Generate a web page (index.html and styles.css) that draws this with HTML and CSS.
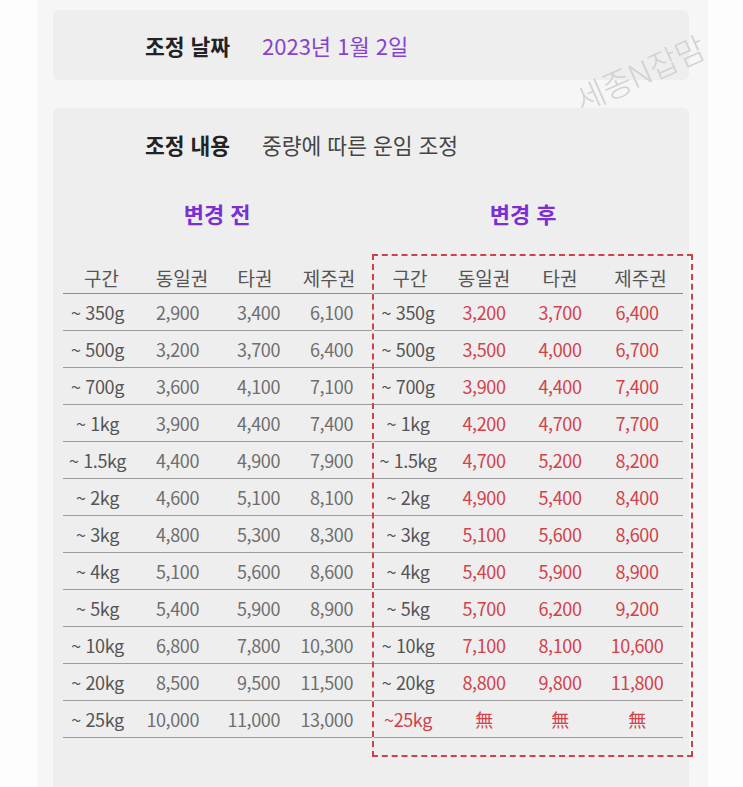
FILE: index.html
```html
<!DOCTYPE html>
<html lang="ko">
<head>
<meta charset="utf-8">
<title>운임 조정</title>
<link rel="stylesheet" href="styles.css">
</head>
<body>
<div class="panel">
  <div class="card card-date">
    <span class="label">조정 날짜</span>
    <span class="date">2023년 1월 2일</span>
  </div>
  <div class="card card-main">
    <div class="info">
      <span class="label">조정 내용</span>
      <span class="desc">중량에 따른 운임 조정</span>
    </div>
    <div class="headings">
      <div class="heading left-h">변경 전</div>
      <div class="heading right-h">변경 후</div>
    </div>
    <div class="tables">
      <div class="tbl tbl-before">
        <div class="row head"><span>구간</span><span>동일권</span><span>타권</span><span>제주권</span></div>
        <div class="row"><span>~ 350g</span><span>2,900</span><span>3,400</span><span>6,100</span></div>
        <div class="row"><span>~ 500g</span><span>3,200</span><span>3,700</span><span>6,400</span></div>
        <div class="row"><span>~ 700g</span><span>3,600</span><span>4,100</span><span>7,100</span></div>
        <div class="row"><span>~ 1kg</span><span>3,900</span><span>4,400</span><span>7,400</span></div>
        <div class="row"><span>~ 1.5kg</span><span>4,400</span><span>4,900</span><span>7,900</span></div>
        <div class="row"><span>~ 2kg</span><span>4,600</span><span>5,100</span><span>8,100</span></div>
        <div class="row"><span>~ 3kg</span><span>4,800</span><span>5,300</span><span>8,300</span></div>
        <div class="row"><span>~ 4kg</span><span>5,100</span><span>5,600</span><span>8,600</span></div>
        <div class="row"><span>~ 5kg</span><span>5,400</span><span>5,900</span><span>8,900</span></div>
        <div class="row"><span>~ 10kg</span><span>6,800</span><span>7,800</span><span>10,300</span></div>
        <div class="row"><span>~ 20kg</span><span>8,500</span><span>9,500</span><span>11,500</span></div>
        <div class="row"><span>~ 25kg</span><span>10,000</span><span>11,000</span><span>13,000</span></div>
      </div>
      <div class="box">
        <div class="tbl tbl-after">
          <div class="row head"><span>구간</span><span>동일권</span><span>타권</span><span>제주권</span></div>
          <div class="row"><span>~ 350g</span><span>3,200</span><span>3,700</span><span>6,400</span></div>
          <div class="row"><span>~ 500g</span><span>3,500</span><span>4,000</span><span>6,700</span></div>
          <div class="row"><span>~ 700g</span><span>3,900</span><span>4,400</span><span>7,400</span></div>
          <div class="row"><span>~ 1kg</span><span>4,200</span><span>4,700</span><span>7,700</span></div>
          <div class="row"><span>~ 1.5kg</span><span>4,700</span><span>5,200</span><span>8,200</span></div>
          <div class="row"><span>~ 2kg</span><span>4,900</span><span>5,400</span><span>8,400</span></div>
          <div class="row"><span>~ 3kg</span><span>5,100</span><span>5,600</span><span>8,600</span></div>
          <div class="row"><span>~ 4kg</span><span>5,400</span><span>5,900</span><span>8,900</span></div>
          <div class="row"><span>~ 5kg</span><span>5,700</span><span>6,200</span><span>9,200</span></div>
          <div class="row"><span>~ 10kg</span><span>7,100</span><span>8,100</span><span>10,600</span></div>
          <div class="row"><span>~ 20kg</span><span>8,800</span><span>9,800</span><span>11,800</span></div>
          <div class="row last"><span>~25kg</span><span>無</span><span>無</span><span>無</span></div>
        </div>
      </div>
    </div>
  </div>
</div>
<div class="watermark">세종N잡맘</div>
</body>
</html>
```

FILE: styles.css
```css
* { box-sizing: border-box; }

body {
  margin: 0;
  background: #fdfdfd;
  font-family: "Noto Sans CJK KR", "Noto Sans", sans-serif;
  color: #333;
  position: relative;
  overflow: hidden;
}

.panel {
  margin-left: 37px;
  width: 671px;
  min-height: 787px;
  background: #f6f6f6;
  padding: 10px 19px 0 16px;
}

.card {
  background: #eeeeee;
  border-radius: 6px;
}

.card-date {
  height: 70px;
  display: flex;
  align-items: center;
  padding-left: 92px;
}

.label {
  display: inline-block;
  width: 117px;
  font-size: 21.5px;
  font-weight: 700;
  color: #222;
}

.date {
  font-size: 22px;
  color: #8743cf;
}

.card-main {
  margin-top: 28px;
  padding: 22px 10px 40px 10px;
  border-radius: 6px 6px 0 0;
}

.info {
  height: 30px;
  line-height: 30px;
  padding-left: 82px;
  display: flex;
}

.desc {
  font-size: 21.5px;
  color: #444;
}

.headings {
  margin-top: 38px;
  display: flex;
  height: 30px;
  line-height: 30px;
}

.heading {
  font-size: 22px;
  font-weight: 700;
  color: #7a2fd3;
  text-align: center;
}

.left-h { width: 309px; padding-left: 6px; }
.right-h { width: 321px; padding-left: 2px; }

.tables {
  margin-top: 26px;
  display: flex;
  align-items: flex-start;
}

.tbl {
  width: 309px;
  font-size: 18px;
  letter-spacing: -0.4px;
}

.tbl-before { padding-top: 2px; }

.box {
  border: 2px dashed #d4404a;
  padding: 0 8px 17px 0;
  margin-right: -4px;
}

.row {
  display: grid;
  height: 37px;
  align-items: center;
  border-bottom: 1px solid #9c9c9c;
}

.row.head {
  height: 38px;
  padding-top: 5px;
  border-bottom-color: #8e8e8e;
}

.row span { white-space: nowrap; }

.tbl-before .row { grid-template-columns: 77px 84px 62px 86px; }
.tbl-after .row { grid-template-columns: 72px 76px 76px 85px; }

/* before table */
.tbl-before .row span { color: #6e6e6e; }
.tbl-before .row span:nth-child(1) { text-align: center; padding-right: 8px; color: #555; }
.tbl-before .row span:nth-child(2) { text-align: right; padding-right: 25px; }
.tbl-before .row span:nth-child(3) { text-align: right; padding-right: 6px; }
.tbl-before .row span:nth-child(4) { text-align: right; padding-right: 19px; }

/* after table */
.tbl-after .row span { text-align: center; color: #d1424b; }
.tbl-after .row span:nth-child(1) { padding-right: 4px; color: #555; }
.tbl-after .row span:nth-child(4) { padding-right: 7px; }
.tbl-after .row.last span:nth-child(1) { color: #d1424b; }

/* header cells */
.tbl .row.head span:nth-child(n) {
  text-align: center;
  color: #555;
  padding: 0;
  font-size: 19px;
  letter-spacing: 0;
}

.watermark {
  position: absolute;
  left: 639px;
  top: 72px;
  transform: translate(-50%, -50%) rotate(-24deg);
  font-size: 32px;
  font-weight: 300;
  color: #d2d2d2;
  white-space: nowrap;
  letter-spacing: -0.5px;
}
```
